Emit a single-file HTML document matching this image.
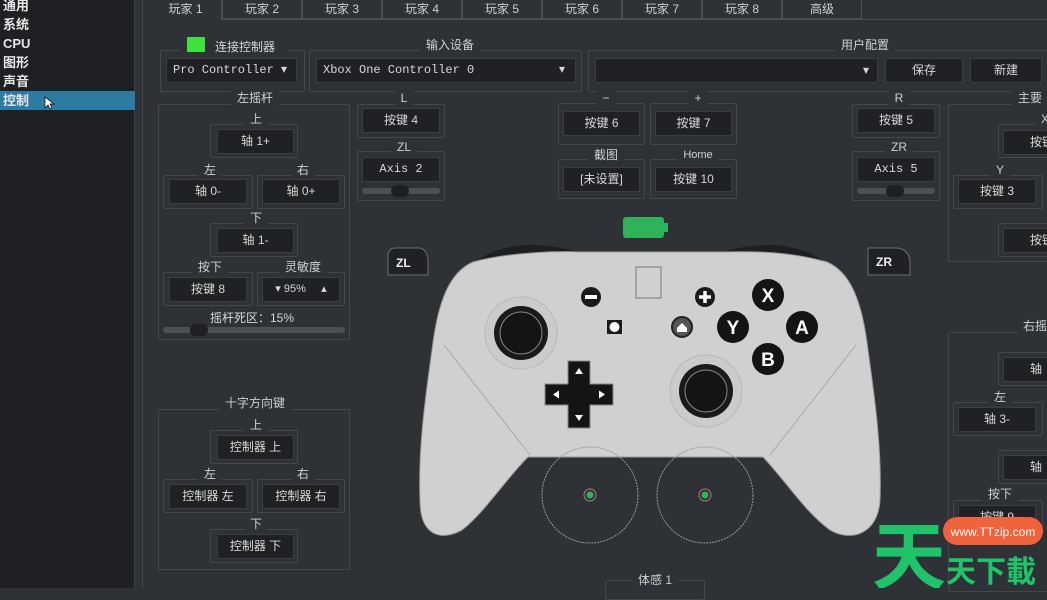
<!DOCTYPE html>
<html><head><meta charset="utf-8"><style>
*{margin:0;padding:0;box-sizing:border-box}
body{width:1047px;height:588px;overflow:hidden;background:#2e3136;font-family:"Liberation Sans","Noto Sans CJK SC",sans-serif;color:#d6d6d6;position:relative}
.a{position:absolute}
.side{left:0;top:0;width:135px;height:588px;background:#1e2023;border-right:1px solid #3b3e43}
.side div{position:absolute;left:3px;font-size:13px;font-weight:bold;color:#e8e8e8;line-height:19px}
.g{position:absolute;border:1px solid #44474c;border-radius:2px}
.l{position:absolute;font-size:12px;color:#d0d0d0;background:#2e3136;padding:0 6px;transform:translateX(-50%);line-height:14px;white-space:nowrap}
.b{position:absolute;background:#1f2124;border:1px solid #3a3d42;font-size:12px;color:#d8d8d8;text-align:center;line-height:23px;height:25px;white-space:nowrap;overflow:hidden}
.m{font-family:"Liberation Mono","Noto Sans CJK SC",monospace}
.tab{position:absolute;top:0;height:19px;border:1px solid #4a4d52;border-top:none;font-size:12px;text-align:center;line-height:18px;color:#d0d0d0}
.sl{position:absolute;height:6px;background:#4c4f54;border-radius:3px}
.hd{position:absolute;width:18px;height:12px;background:#1d1f22;border-radius:6px;top:-3px}
</style></head><body>
<div class="a side">
<div style="top:-4px">通用</div><div style="top:15px">系统</div><div style="top:34px">CPU</div><div style="top:53px">图形</div><div style="top:72px">声音</div>
<div style="top:91px;left:0;width:135px;height:19px;background:#2d7aa2;padding-left:3px">控制</div>
</div>
<svg class="a" style="left:44px;top:96px" width="12" height="14"><path d="M1 1 L1 12 L4 9 L6 13 L8 12 L6 8 L10 8 Z" fill="#fff" stroke="#000" stroke-width=".7"/></svg>
<div class="a" style="left:142px;top:0;width:1px;height:588px;background:#44474c"></div>
<div class="a" style="left:150px;top:19px;width:897px;height:1px;background:#4a4d52"></div>
<div class="tab" style="left:150px;width:72px;border:none;border-right:1px solid #4a4d52;background:#2e3136;height:20px">玩家 1</div>
<div class="tab" style="left:222px;width:80px">玩家 2</div>
<div class="tab" style="left:302px;width:80px">玩家 3</div>
<div class="tab" style="left:382px;width:80px">玩家 4</div>
<div class="tab" style="left:462px;width:80px">玩家 5</div>
<div class="tab" style="left:542px;width:80px">玩家 6</div>
<div class="tab" style="left:622px;width:80px">玩家 7</div>
<div class="tab" style="left:702px;width:80px">玩家 8</div>
<div class="tab" style="left:782px;width:80px">高级</div>

<div class="g" style="left:160px;top:50px;width:145px;height:42px"></div>
<div class="a" style="left:180px;top:38px;width:108px;height:14px;background:#2e3136"></div>
<div class="a" style="left:187px;top:37px;width:18px;height:15px;background:#3ee23a"></div>
<div class="a" style="left:215px;top:38px;font-size:12px">连接控制器</div>
<div class="b m" style="left:166px;top:58px;width:131px;text-align:left;padding-left:6px">Pro Controller ▾</div>
<div class="g" style="left:309px;top:50px;width:273px;height:42px"></div><div class="l" style="left:450px;top:38px">输入设备</div>
<div class="b m" style="left:316px;top:58px;width:260px;text-align:left;padding-left:6px">Xbox One Controller 0<span style="position:absolute;right:10px">▾</span></div>
<div class="g" style="left:588px;top:50px;width:470px;height:42px"></div><div class="l" style="left:865px;top:38px">用户配置</div>
<div class="b" style="left:595px;top:58px;width:283px;text-align:right;padding-right:8px">▾</div>
<div class="b" style="left:885px;top:58px;width:78px">保存</div>
<div class="b" style="left:970px;top:58px;width:72px">新建</div>

<div class="g" style="left:158px;top:104px;width:192px;height:236px"></div><div class="l" style="left:255px;top:91px">左摇杆</div>
<div class="g" style="left:210px;top:124px;width:88px;height:34px"></div><div class="l" style="left:256px;top:112px">上</div>
<div class="b" style="left:217px;top:129px;width:77px">轴 1+</div>
<div class="g" style="left:163px;top:175px;width:90px;height:34px"></div><div class="l" style="left:210px;top:163px">左</div>
<div class="b" style="left:169px;top:179px;width:78px">轴 0-</div>
<div class="g" style="left:257px;top:175px;width:88px;height:34px"></div><div class="l" style="left:303px;top:163px">右</div>
<div class="b" style="left:262px;top:179px;width:78px">轴 0+</div>
<div class="g" style="left:210px;top:223px;width:88px;height:34px"></div><div class="l" style="left:256px;top:211px">下</div>
<div class="b" style="left:217px;top:228px;width:77px">轴 1-</div>
<div class="g" style="left:163px;top:272px;width:90px;height:34px"></div><div class="l" style="left:210px;top:260px">按下</div>
<div class="b" style="left:169px;top:277px;width:78px">按键 8</div>
<div class="g" style="left:257px;top:272px;width:88px;height:34px"></div><div class="l" style="left:303px;top:260px">灵敏度</div>
<div class="b" style="left:262px;top:277px;width:78px;font-size:11px">▾ 95%&nbsp;&nbsp;&nbsp;&nbsp;&nbsp;▴</div>
<div class="a" style="left:210px;top:309px;font-size:12px">摇杆死区：15%</div>
<div class="sl" style="left:163px;top:327px;width:182px"><div class="hd" style="left:27px"></div></div>

<div class="g" style="left:357px;top:104px;width:88px;height:34px"></div><div class="l" style="left:404px;top:91px">L</div>
<div class="b" style="left:362px;top:108px;width:78px">按键 4</div>
<div class="g" style="left:357px;top:151px;width:88px;height:50px"></div><div class="l" style="left:404px;top:140px">ZL</div>
<div class="b m" style="left:362px;top:157px;width:78px">Axis 2</div>
<div class="sl" style="left:362px;top:188px;width:78px"><div class="hd" style="left:29px"></div></div>

<div class="g" style="left:558px;top:103px;width:87px;height:42px"></div><div class="l" style="left:606px;top:91px">−</div>
<div class="b" style="left:563px;top:111px;width:77px">按键 6</div>
<div class="g" style="left:650px;top:103px;width:87px;height:42px"></div><div class="l" style="left:698px;top:91px">+</div>
<div class="b" style="left:655px;top:111px;width:77px">按键 7</div>
<div class="g" style="left:558px;top:159px;width:87px;height:40px"></div><div class="l" style="left:606px;top:148px">截图</div>
<div class="b" style="left:563px;top:167px;width:77px">[未设置]</div>
<div class="g" style="left:650px;top:159px;width:87px;height:40px"></div><div class="l" style="left:698px;top:148px;font-size:11px">Home</div>
<div class="b" style="left:655px;top:167px;width:77px">按键 10</div>

<div class="g" style="left:852px;top:104px;width:88px;height:34px"></div><div class="l" style="left:899px;top:91px">R</div>
<div class="b" style="left:857px;top:108px;width:78px">按键 5</div>
<div class="g" style="left:852px;top:151px;width:88px;height:50px"></div><div class="l" style="left:899px;top:140px">ZR</div>
<div class="b m" style="left:857px;top:157px;width:78px">Axis 5</div>
<div class="sl" style="left:857px;top:188px;width:78px"><div class="hd" style="left:29px"></div></div>

<div class="g" style="left:948px;top:104px;width:110px;height:158px"></div><div class="l" style="left:1030px;top:91px">主要</div>
<div class="g" style="left:998px;top:124px;width:60px;height:34px"></div><div class="l" style="left:1045px;top:112px">X</div>
<div class="b" style="left:1003px;top:130px;width:60px;text-align:left;padding-left:26px">按键</div>
<div class="g" style="left:953px;top:175px;width:90px;height:34px"></div><div class="l" style="left:1000px;top:163px">Y</div>
<div class="b" style="left:958px;top:179px;width:78px">按键 3</div>
<div class="g" style="left:998px;top:223px;width:60px;height:34px"></div>
<div class="b" style="left:1003px;top:228px;width:60px;text-align:left;padding-left:26px">按键</div>

<div class="g" style="left:948px;top:332px;width:110px;height:260px"></div><div class="l" style="left:1035px;top:319px">右摇</div>
<div class="g" style="left:998px;top:352px;width:60px;height:34px"></div>
<div class="b" style="left:1003px;top:357px;width:60px;text-align:left;padding-left:26px">轴</div>
<div class="g" style="left:953px;top:402px;width:90px;height:34px"></div><div class="l" style="left:1000px;top:390px">左</div>
<div class="b" style="left:958px;top:407px;width:78px">轴 3-</div>
<div class="g" style="left:998px;top:450px;width:60px;height:34px"></div>
<div class="b" style="left:1003px;top:455px;width:60px;text-align:left;padding-left:26px">轴</div>
<div class="g" style="left:953px;top:500px;width:90px;height:34px"></div><div class="l" style="left:1000px;top:487px">按下</div>
<div class="b" style="left:958px;top:505px;width:78px">按键 9</div>

<div class="g" style="left:158px;top:409px;width:192px;height:161px"></div><div class="l" style="left:255px;top:396px">十字方向键</div>
<div class="g" style="left:210px;top:430px;width:88px;height:34px"></div><div class="l" style="left:256px;top:418px">上</div>
<div class="b" style="left:217px;top:435px;width:77px">控制器 上</div>
<div class="g" style="left:163px;top:479px;width:90px;height:34px"></div><div class="l" style="left:210px;top:467px">左</div>
<div class="b" style="left:169px;top:484px;width:78px">控制器 左</div>
<div class="g" style="left:257px;top:479px;width:88px;height:34px"></div><div class="l" style="left:303px;top:467px">右</div>
<div class="b" style="left:262px;top:484px;width:78px">控制器 右</div>
<div class="g" style="left:210px;top:529px;width:88px;height:34px"></div><div class="l" style="left:256px;top:517px">下</div>
<div class="b" style="left:217px;top:534px;width:77px">控制器 下</div>

<div class="g" style="left:605px;top:580px;width:100px;height:20px"></div><div class="l" style="left:655px;top:573px">体感 1</div>

<svg class="a" style="left:0;top:0" width="1047" height="588">
<rect x="623" y="217" width="41" height="21" rx="3" fill="#2fb35a"/><rect x="664" y="223" width="4" height="9" fill="#2fb35a"/>
<path d="M388 256 Q388 248 396 248 L420 248 Q428 250 428 262 L428 275 L388 275 Z" fill="#1f2124" stroke="#6a6d72"/>
<text x="396" y="267" font-size="12" font-weight="bold" fill="#eee" font-family="Liberation Sans">ZL</text>
<path d="M868 248 L898 248 Q909 250 910 262 L910 275 L868 275 Z" fill="#1f2124" stroke="#6a6d72"/>
<text x="876" y="266" font-size="12" font-weight="bold" fill="#eee" font-family="Liberation Sans">ZR</text>
<path d="M470 266 C488 250 515 244 535 245 C555 246 568 249 578 252 L474 270 Z" fill="#1d1f22"/>
<path d="M830 266 C812 250 785 244 765 245 C745 246 732 249 722 252 L826 270 Z" fill="#1d1f22"/>
<path d="M473 262 C510 252 560 251 580 252 L720 252 C760 251 790 252 827 262 C850 272 862 300 868 350 C875 400 882 450 880 500 C878 535 850 542 830 530 C805 512 785 480 763 457 L528 457 C505 480 485 512 462 530 C440 542 420 535 420 500 C418 450 425 400 432 350 C438 300 450 272 473 262 Z" fill="#d0d0d0" stroke="#9a9a9a"/>
<path d="M444 345 L530 455 M856 345 L770 455" stroke="#a8a8a8" fill="none"/>
<rect x="636" y="267" width="25" height="31" fill="none" stroke="#777"/>
<circle cx="521" cy="333" r="36" fill="#cbcbcb" stroke="#b8b8b8"/><circle cx="521" cy="333" r="27" fill="#1a1a1a"/><circle cx="521" cy="333" r="21" fill="#141414" stroke="#888"/>
<circle cx="706" cy="391" r="36" fill="#cbcbcb" stroke="#b8b8b8"/><circle cx="706" cy="391" r="27" fill="#1a1a1a"/><circle cx="706" cy="391" r="21" fill="#141414" stroke="#888"/>
<circle cx="591" cy="297" r="10" fill="#1a1a1a"/><rect x="585" y="295" width="12" height="4" fill="#fff"/>
<circle cx="705" cy="297" r="10" fill="#1a1a1a"/><path d="M699 297h12M705 291v12" stroke="#fff" stroke-width="3.5"/>
<rect x="607" y="320" width="15" height="14" fill="#1a1a1a"/><circle cx="614.5" cy="327" r="5" fill="#fff"/>
<circle cx="682" cy="327" r="10" fill="#555" stroke="#222" stroke-width="2"/><path d="M677 328 L682 323 L687 328 V332 H677 Z" fill="#fff"/>
<g font-family="Liberation Sans" font-weight="bold" font-size="19" fill="#fff" text-anchor="middle">
<circle cx="768" cy="295" r="16" fill="#141414"/><text x="768" y="302">X</text>
<circle cx="733" cy="327" r="16" fill="#141414"/><text x="733" y="334">Y</text>
<circle cx="802" cy="327" r="16" fill="#141414"/><text x="802" y="334">A</text>
<circle cx="768" cy="359" r="16" fill="#141414"/><text x="768" y="366">B</text></g>
<path d="M568 361h22v23h23v21h-23v23h-22v-23h-23v-21h23z" fill="#141414" stroke="#888"/>
<path d="M579 368l-4 6h8zM579 421l-4-6h8zM553 394.5l6-4v8zM605 394.5l-6-4v8z" fill="#fff"/>
<circle cx="590" cy="495" r="48" fill="none" stroke="#9a9a9a" stroke-dasharray="2 1"/><circle cx="590" cy="495" r="6" fill="none" stroke="#b08080"/><circle cx="590" cy="495" r="3.5" fill="#2fb35a"/>
<circle cx="705" cy="495" r="48" fill="none" stroke="#9a9a9a" stroke-dasharray="2 1"/><circle cx="705" cy="495" r="6" fill="none" stroke="#b08080"/><circle cx="705" cy="495" r="3.5" fill="#2fb35a"/>
<text x="872" y="583" font-size="74" font-weight="bold" fill="#1fc46a" font-family="Noto Sans CJK SC">天</text>
<rect x="943" y="517" width="100" height="28" rx="14" fill="#f2623a"/>
<text x="993" y="536" font-size="12" fill="#fff" text-anchor="middle" font-family="Liberation Sans">www.TTzip.com</text>
<text x="946" y="582" font-size="30" font-weight="bold" fill="#1fc46a" font-family="Noto Sans CJK TC">天下載</text>
</svg>
</body></html>
